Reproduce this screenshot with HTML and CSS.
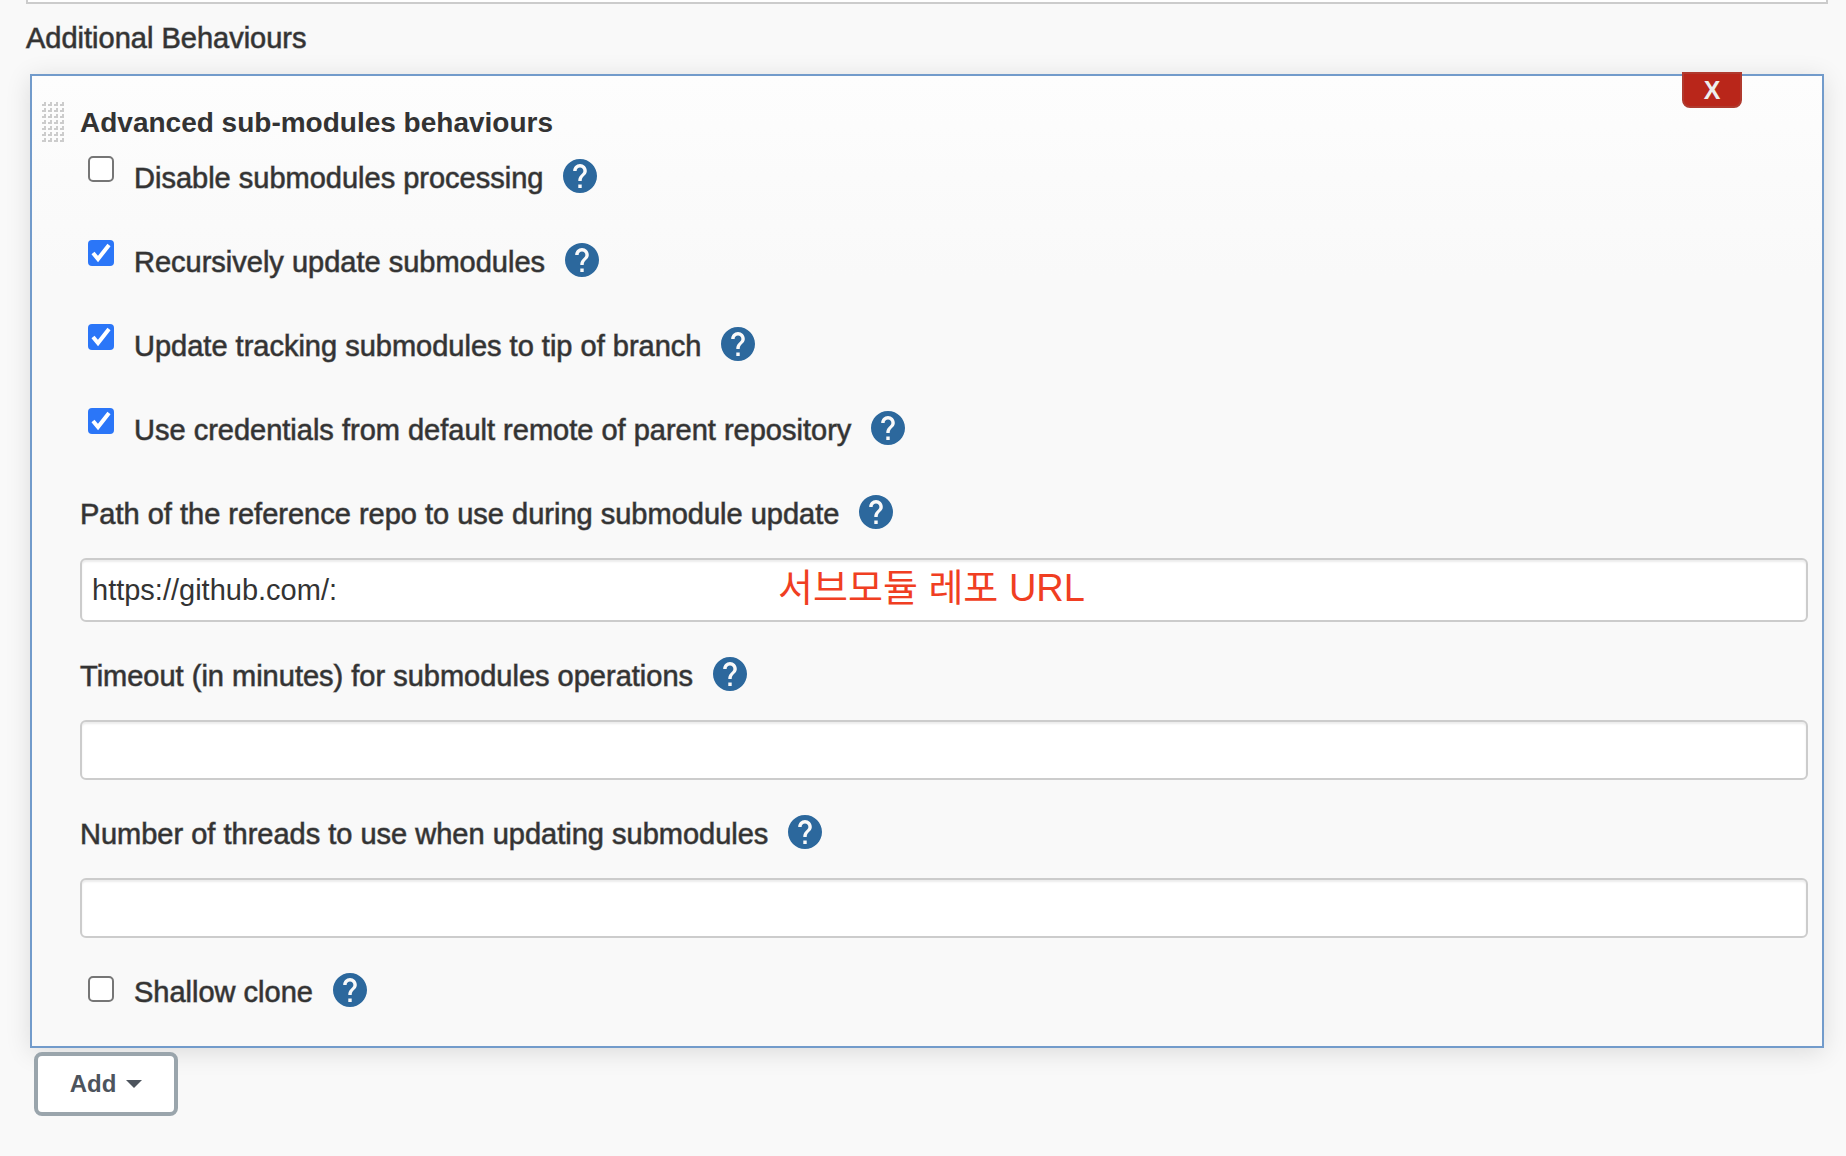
FILE: index.html
```html
<!DOCTYPE html>
<html lang="en">
<head>
<meta charset="utf-8">
<title>Additional Behaviours</title>
<link rel="stylesheet" href="styles.css">
</head>
<body>
<svg class="sprite" aria-hidden="true">
  <symbol id="help" viewBox="0 0 24 24"><path d="M12 2C6.48 2 2 6.48 2 12s4.480 10 10 10 10-4.480 10-10S17.520 2 12 2zm1 17h-2v-2h2v2zm2.070-7.750l-.9.920C13.450 12.900 13 13.500 13 15h-2v-.5c0-1.100.45-2.100 1.170-2.830l1.240-1.260c.37-.36.59-.86.59-1.410 0-1.100-.9-2-2-2s-2 .9-2 2H8c0-2.210 1.790-4 4-4s4 1.790 4 4c0 .88-.36 1.680-.93 2.250z"/></symbol>
</svg>
<main class="page">
  <div class="previous-field"></div>
  <h2 class="section-title">Additional Behaviours</h2>

  <section class="panel">
    <button class="delete" type="button">X</button>
    <svg class="handle" viewBox="0 0 24 44" aria-hidden="true">
      <defs><pattern id="grip" width="6" height="6" patternUnits="userSpaceOnUse"><path d="M3 1h2v4H1V3h2z" fill="#ccc"/></pattern></defs>
      <rect width="24" height="42" fill="url(#grip)"/>
    </svg>
    <div class="fields">
      <h3 class="panel-title">Advanced sub-modules behaviours</h3>
      <div class="option">
        <input type="checkbox" id="disable"><label for="disable">Disable submodules processing</label>
        <a class="help" href="#" aria-label="Help"><svg viewBox="2 2 20 20"><use href="#help" width="24" height="24"/></svg></a>
      </div>
      <div class="option">
        <input type="checkbox" id="recursive" checked><label for="recursive">Recursively update submodules</label>
        <a class="help" href="#" aria-label="Help"><svg viewBox="2 2 20 20"><use href="#help" width="24" height="24"/></svg></a>
      </div>
      <div class="option">
        <input type="checkbox" id="tracking" checked><label for="tracking">Update tracking submodules to tip of branch</label>
        <a class="help" href="#" aria-label="Help"><svg viewBox="2 2 20 20"><use href="#help" width="24" height="24"/></svg></a>
      </div>
      <div class="option">
        <input type="checkbox" id="credentials" checked><label for="credentials">Use credentials from default remote of parent repository</label>
        <a class="help" href="#" aria-label="Help"><svg viewBox="2 2 20 20"><use href="#help" width="24" height="24"/></svg></a>
      </div>
      <div class="field">
        <div class="field-head">
          <label for="path">Path of the reference repo to use during submodule update</label>
          <a class="help" href="#" aria-label="Help"><svg viewBox="2 2 20 20"><use href="#help" width="24" height="24"/></svg></a>
        </div>
        <div class="input-wrap">
          <input class="text filled" type="text" id="path" value="https://github.com/:">
          <span class="note" lang="ko">서브모듈 레포 URL</span>
        </div>
      </div>
      <div class="field">
        <div class="field-head">
          <label for="timeout">Timeout (in minutes) for submodules operations</label>
          <a class="help" href="#" aria-label="Help"><svg viewBox="2 2 20 20"><use href="#help" width="24" height="24"/></svg></a>
        </div>
        <input class="text" type="text" id="timeout">
      </div>
      <div class="field">
        <div class="field-head">
          <label for="threads">Number of threads to use when updating submodules</label>
          <a class="help" href="#" aria-label="Help"><svg viewBox="2 2 20 20"><use href="#help" width="24" height="24"/></svg></a>
        </div>
        <input class="text" type="text" id="threads">
      </div>
      <div class="option option-last">
        <input type="checkbox" id="shallow"><label for="shallow">Shallow clone</label>
        <a class="help" href="#" aria-label="Help"><svg viewBox="2 2 20 20"><use href="#help" width="24" height="24"/></svg></a>
      </div>
    </div>
  </section>

  <button class="add" type="button">Add<span class="caret"></span></button>
</main>
</body>
</html>
```

FILE: styles.css
```css
* { box-sizing: border-box; }

body {
  margin: 0;
  background: #f9f9f9;
  color: #333;
  font: 29px/32px "Liberation Sans", "Noto Sans CJK KR", sans-serif;
}

.sprite { display: none; }

.page { padding: 0 22px 40px 26px; }

.previous-field {
  height: 4px;
  margin-right: -4px;
  border: 2px solid #ccc;
  border-top: 0;
  background: #fff;
}

h2, h3 { margin: 0; font-size: inherit; }

.section-title {
  margin: 18px 0 20px;
  font-weight: 400;
}

.section-title,
label { -webkit-text-stroke: 1px rgba(51, 51, 51, 0.6); }

.panel {
  position: relative;
  display: flex;
  margin-left: 4px;
  padding: 25px 14px 35px 9px;
  border: 2px solid #729bcb;
  background: linear-gradient(#fdfdfd, #f9f9f9 200px);
  box-shadow: 0 4px 24px rgba(0, 0, 0, 0.12);
}

.delete {
  position: absolute;
  top: -4px;
  right: 80px;
  width: 60px;
  height: 36px;
  padding: 0;
  border: 2px solid #b03a2e;
  border-radius: 0 0 8px 8px;
  background: #b9261a;
  color: #eee;
  font: bold 25px/32px "Liberation Sans", sans-serif;
}

.handle { flex: none; width: 24px; height: 44px; }

.fields {
  flex: 1;
  min-width: 0;
  margin-left: 15px;
}

.panel-title {
  margin: 6px 0 17px;
  font-size: 28px;
  font-weight: 700;
}

.option {
  display: flex;
  align-items: flex-start;
  height: 84px;
  padding-left: 8px;
}

.option input {
  appearance: none;
  flex: none;
  width: 26px;
  height: 26px;
  margin: 0 20px 0 0;
  border: 2px solid #767676;
  border-radius: 5px;
  background: #fff;
}

.option input:checked {
  border: 0;
  border-radius: 4px;
  background: #2b76f8 url("data:image/svg+xml,%3Csvg xmlns='http://www.w3.org/2000/svg' viewBox='0 0 26 26'%3E%3Cpath d='M5 13l5 6L21 5' fill='none' stroke='white' stroke-width='4'/%3E%3C/svg%3E");
}

.option label { margin-top: 6px; }

.help {
  flex: none;
  width: 34px;
  height: 34px;
  margin: 3px 0 0 20px;
}

.help svg { display: block; fill: #2c689d; }

.field-head {
  display: flex;
  align-items: flex-start;
  height: 66px;
}

.field-head label { margin-top: 6px; }

.field { margin-bottom: 32px; }

.input-wrap { position: relative; }

.text {
  display: block;
  width: 100%;
  height: 60px;
  padding: 0 10px;
  border: 2px solid #ccc;
  border-radius: 6px;
  background: #fff;
  box-shadow: inset 0 2px 2px rgba(0, 0, 0, 0.08);
  color: #333;
  font: inherit;
}

.filled { height: 64px; }

.note {
  position: absolute;
  top: 8px;
  left: 698px;
  color: #f03e22;
  font-size: 38px;
  line-height: 44px;
  white-space: nowrap;
}

.option-last { height: 41px; }
.option-last input { margin-top: 6px; }

.add {
  display: flex;
  align-items: center;
  justify-content: center;
  gap: 10px;
  position: relative;
  width: 144px;
  height: 64px;
  margin: 4px 0 0 8px;
  padding: 0;
  border: 4px solid #9aa5ac;
  border-radius: 8px;
  background: #fff;
  color: #4d545d;
  font: bold 24px/28px "Liberation Sans", sans-serif;
}

.caret {
  border: 8px solid transparent;
  border-top-color: currentColor;
  border-bottom: 0;
}
```
